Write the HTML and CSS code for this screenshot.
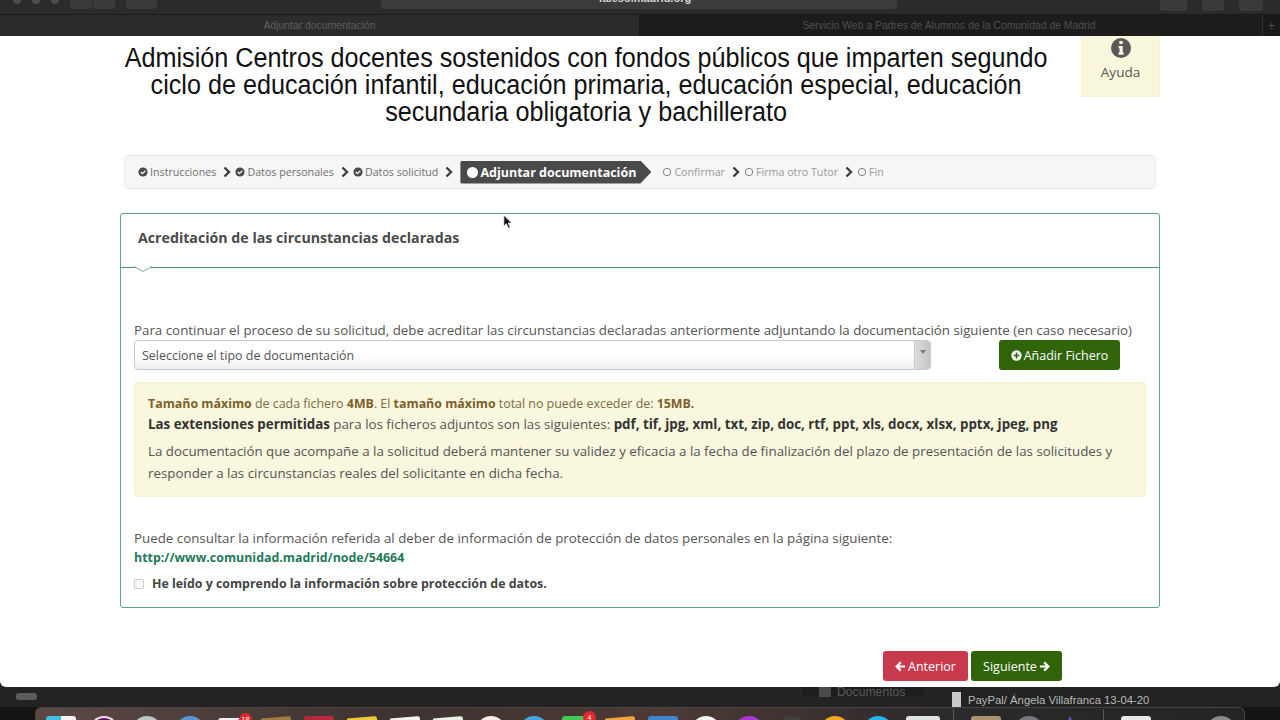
FILE: index.html
```html
<!DOCTYPE html>
<html lang="es">
<head>
<meta charset="utf-8">
<title>Adjuntar documentación</title>
<link rel="stylesheet" href="styles.css">
</head>
<body>
<svg class="defs" width="0" height="0" aria-hidden="true">
  <defs>
    <symbol id="i-check" viewBox="0 0 12 12"><circle cx="6" cy="6" r="5.5" fill="currentColor"/><path d="M3.3 6.1 5.2 8 8.8 4.4" fill="none" stroke="#f5f5f5" stroke-width="1.6"/></symbol>
    <symbol id="i-chev" viewBox="0 0 10 12"><path d="M2.5 1.5 7 6l-4.500 4.500" fill="none" stroke="currentColor" stroke-width="2.400"/></symbol>
    <symbol id="i-ring" viewBox="0 0 12 12"><circle cx="6" cy="6" r="4.400" fill="none" stroke="currentColor" stroke-width="1.200"/></symbol>
    <symbol id="i-plus" viewBox="0 0 12 12"><circle cx="6" cy="6" r="5.600" fill="currentColor"/><path d="M6 2.800v6.400M2.800 6h6.400" stroke="#2f6409" stroke-width="1.800"/></symbol>
    <symbol id="i-left" viewBox="0 0 12 12"><path d="M6.300 1.500 1.800 6l4.500 4.500M2.200 6H11" fill="none" stroke="currentColor" stroke-width="2.400"/></symbol>
    <symbol id="i-right" viewBox="0 0 12 12"><path d="M5.700 1.500 10.200 6l-4.500 4.500M9.800 6H1" fill="none" stroke="currentColor" stroke-width="2.400"/></symbol>
  </defs>
</svg>

<header class="chrome">
  <div class="toolbar">
    <div class="lights"><span class="light"></span><span class="light"></span><span class="light"></span></div>
    <div class="navs"><span class="nav"></span><span class="nav"></span></div>
    <span class="nav side"></span>
    <div class="address"><span class="url">faleso.madrid.org</span></div>
    <div class="tools"><span class="tool t1"></span><span class="tool t2"></span><span class="tool t3"></span></div>
  </div>
  <div class="tabs">
    <div class="tab current">Adjuntar documentación</div>
    <div class="tab">Servicio Web a Padres de Alumnos de la Comunidad de Madrid</div>
    <div class="tab-add">+</div>
  </div>
</header>

<main class="page">
  <div class="top">
    <h1 class="title">Admisión Centros docentes sostenidos con fondos públicos que imparten segundo ciclo de educación infantil, educación primaria, educación especial, educación secundaria obligatoria y bachillerato</h1>
    <aside class="help">
      <svg class="help-icon" viewBox="0 0 20 20"><circle cx="10" cy="10" r="10" fill="#595959"/><path d="M8.300 2.900h3.400v3H8.300zM7.500 8h4.200v6.400h1v2.300H7.500v-2.300h1v-4.100h-1z" fill="#f8f7dc"/></svg>
      <span>Ayuda</span>
    </aside>
  </div>

  <nav class="steps">
    <span class="step"><svg class="ico"><use href="#i-check"/></svg>Instrucciones</span>
    <svg class="chev"><use href="#i-chev"/></svg>
    <span class="step"><svg class="ico"><use href="#i-check"/></svg>Datos personales</span>
    <svg class="chev"><use href="#i-chev"/></svg>
    <span class="step"><svg class="ico"><use href="#i-check"/></svg>Datos solicitud</span>
    <svg class="chev"><use href="#i-chev"/></svg>
    <span class="step-active"><span class="dot"></span>Adjuntar documentación</span>
    <span class="step off first-off"><svg class="ico"><use href="#i-ring"/></svg>Confirmar</span>
    <svg class="chev"><use href="#i-chev"/></svg>
    <span class="step off"><svg class="ico"><use href="#i-ring"/></svg>Firma otro Tutor</span>
    <svg class="chev"><use href="#i-chev"/></svg>
    <span class="step off"><svg class="ico"><use href="#i-ring"/></svg>Fin</span>
  </nav>

  <section class="card">
    <div class="card-head">
      <h2>Acreditación de las circunstancias declaradas</h2>
      <svg class="notch" viewBox="0 0 18 7"><path d="M0 .5 9 5.500 18 .5" fill="#fff" stroke="#7fae9c"/></svg>
    </div>
    <div class="card-body">
      <p class="lead">Para continuar el proceso de su solicitud, debe acreditar las circunstancias declaradas anteriormente adjuntando la documentación siguiente (en caso necesario)</p>
      <div class="picker">
        <div class="select"><span class="select-text">Seleccione el tipo de documentación</span><span class="select-arrow"></span></div>
        <button class="btn add"><svg class="btn-ico"><use href="#i-plus"/></svg>Añadir Fichero</button>
      </div>
      <div class="alert">
        <p class="alert-line"><b class="warm">Tamaño máximo</b> de cada fichero <b class="warm">4MB</b>. El <b class="warm">tamaño máximo</b> total no puede exceder de: <b class="warm">15MB.</b></p>
        <p class="alert-line dark"><b>Las extensiones permitidas</b> para los ficheros adjuntos son las siguientes: <b>pdf, tif, jpg, xml, txt, zip, doc, rtf, ppt, xls, docx, xlsx, pptx, jpeg, png</b></p>
        <p class="alert-note">La documentación que acompañe a la solicitud deberá mantener su validez y eficacia a la fecha de finalización del plazo de presentación de las solicitudes y responder a las circunstancias reales del solicitante en dicha fecha.</p>
      </div>
      <p class="privacy">Puede consultar la información referida al deber de información de protección de datos personales en la página siguiente:</p>
      <a class="link" href="#">http://www.comunidad.madrid/node/54664</a>
      <label class="agree"><input class="check" type="checkbox"><span>He leído y comprendo la información sobre protección de datos.</span></label>
    </div>
  </section>

  <div class="actions">
    <button class="btn prev"><svg class="btn-ico"><use href="#i-left"/></svg>Anterior</button>
    <button class="btn next">Siguiente<svg class="btn-ico after"><use href="#i-right"/></svg></button>
  </div>

  <svg class="cursor" viewBox="0 0 12 18"><path d="M1 1v13l3.200-3 2.300 5.500 2.200-1-2.300-5.200H10.500z" fill="#111" stroke="#fff" stroke-width=".8"/></svg>
</main>

<footer class="desktop">
  <div class="strip">
    <span class="pill"></span>
    <div class="docs"><span class="doc-ico"></span>Documentos</div>
    <div class="paypal"><span class="file-ico"></span>PayPal/ Ángela Villafranca 13-04-20</div>
  </div>
  <div class="dock-row">
    <div class="dock">
      <span class="app finder"></span>
      <span class="app circle itunes"></span>
      <span class="app circle grey"></span>
      <span class="app circle blue"></span>
      <span class="app mail"><span class="tilt"></span><span class="badge">18</span></span>
      <span class="app brown tilted"></span>
      <span class="app red"></span>
      <span class="app yellow tilted"></span>
      <span class="app white tilted"></span>
      <span class="app maps tilted"></span>
      <span class="app circle photos"></span>
      <span class="app circle sky"></span>
      <span class="app green"><span class="badge">4</span></span>
      <span class="app orange tilted"></span>
      <span class="app window"></span>
      <span class="app circle white"></span>
      <span class="app circle purple"></span>
      <span class="app circle dim"></span>
      <span class="app circle amber"></span>
      <span class="app circle cyan"></span>
      <span class="app shot"></span>
      <span class="sep"></span>
      <span class="app pic"></span>
      <span class="app circle slate"></span>
      <span class="app tri"></span>
      <span class="sep second"></span>
      <span class="app paper"></span>
      <span class="app circle trash"></span>
    </div>
  </div>
</footer>
</body>
</html>
```
FILE: styles.css
```css
* { box-sizing: border-box; }
html, body { margin: 0; height: 100%; }
body {
  width: 1280px; height: 720px; overflow: hidden;
  display: flex; flex-direction: column;
  background: #202020;
  font-family: "Open Sans", "Liberation Sans", sans-serif;
  color: #555;
}
.defs { position: absolute; }
p, h1, h2 { margin: 0; }

/* browser chrome */
.chrome { flex: 0 0 36px; display: flex; flex-direction: column; background: #2b2b2b; }
.toolbar { height: 14px; display: flex; align-items: flex-start; overflow: hidden; }
.lights { display: flex; gap: 11px; padding-left: 13px; margin-top: -4px; }
.light { width: 8px; height: 8px; border-radius: 50%; background: #4d4d4d; }
.navs { display: flex; gap: 1px; margin-left: 11px; }
.nav { width: 22px; height: 9px; background: #3a3a3a; border-radius: 0 0 3px 3px; }
.nav.side { width: 31px; margin-left: 11px; }
.address { width: 516px; height: 9px; margin-left: 224px; padding-left: 12px; background: #3b3b3b; border-radius: 0 0 3px 3px; text-align: center; }
.url { display: block; margin-top: -9px; font: 700 11px/14px "Liberation Sans", sans-serif; color: #d8d8d8; }
.tools { display: flex; gap: 15px; margin-left: 263px; }
.tool { height: 11px; background: #3a3a3a; border-radius: 0 0 3px 3px; }
.t1 { width: 27px; }
.t2 { width: 22px; }
.t3 { width: 24px; }
.tabs { height: 22px; display: flex; background: #191919; border-top: 1px solid #1a1a1a; }
.tab { display: flex; align-items: center; justify-content: center; width: 622px; padding-right: 4px; font: 10.400px "Liberation Sans", sans-serif; color: #4f4f4f; background: #1c1c1c; }
.tab.current { width: 639px; padding-right: 0; color: #5e5e5e; background: #2c2c2c; margin-right: 1px; }
.tab-add { width: 18px; display: flex; align-items: center; justify-content: center; color: #4a4a4a; font: 13px "Liberation Sans", sans-serif; border-left: 1px solid #333; }

/* page */
.page {
  flex: 0 0 651px; position: relative;
  background: #fff; border-radius: 0 0 6px 6px;
  padding: 0 120px; overflow: hidden;
}
.top { display: flex; align-items: flex-start; height: 119px; }
.title {
  flex: 0 0 997px; margin-right: -65px; padding-top: 9px;
  font: 400 27px/27px "Liberation Sans", sans-serif;
  color: #111; text-align: center;
  transform: translateX(1px) scaleX(.933); transform-origin: 0 0;
}
.help {
  width: 79px; height: 61px; margin-left: 29px;
  background: #f8f7dc; border: 1px solid #f3f2d8; border-top: 0;
  display: flex; flex-direction: column; align-items: center;
  font-size: 13.500px; line-height: 18px; color: #555;
}
.help-icon { width: 20px; height: 20px; margin: 2px 0 5px; }

.steps {
  margin: 0 4px; height: 34px;
  display: flex; align-items: center;
  padding-left: 13px;
  background: #f6f6f6; border: 1px solid #e9e9e9; border-radius: 4px;
  font-size: 10.700px; color: #707070;
}
.step { display: flex; align-items: center; white-space: nowrap; }
.ico { width: 10px; height: 10px; margin-right: 2px; color: #4a4a4a; }
.chev { width: 10px; height: 12px; margin: 0 3px 0 6px; color: #3f3f3f; }
.step.off { color: #9a9a9a; }
.step.off .ico { color: #808080; }
.first-off { margin-left: 11px; }
.step-active {
  display: flex; align-items: center; height: 23px; width: 191px;
  margin-left: 3px; padding-left: 7px;
  background: #4a4a4a; color: #fff;
  font-size: 12.500px; font-weight: 700; white-space: nowrap;
  border-radius: 2px 0 0 2px;
  clip-path: polygon(0 0, 180px 0, 100% 50%, 180px 100%, 0 100%);
}
.dot { width: 11px; height: 11px; border-radius: 50%; background: #fff; margin-right: 2px; }

.card {
  margin-top: 24px; height: 395px;
  border: 1px solid #5aa58c; border-radius: 3px;
  display: flex; flex-direction: column;
}
.card-head {
  flex: 0 0 54px; position: relative;
  padding: 14px 17px 0;
  border-bottom: 1px solid #4f8f74;
}
.card-head h2 { font-size: 14.200px; line-height: 20px; font-weight: 700; color: #4a4a4a; }
.notch { position: absolute; left: 13px; bottom: -6px; width: 18px; height: 7px; }
.card-body { padding: 53px 13px 0; }
.lead { font-size: 13.330px; line-height: 18px; color: #555; white-space: nowrap; }
.picker { display: flex; align-items: center; margin-top: 1px; }
.select {
  width: 797px; height: 30px;
  display: flex; align-items: center; justify-content: space-between;
  padding-left: 7px;
  background: linear-gradient(#fff 50%, #eee);
  border: 1px solid #c9c9c9; border-radius: 4px;
  font-size: 12.470px; color: #555;
}
.select-arrow {
  width: 16px; height: 28px; position: relative;
  background: linear-gradient(90deg, #ddd, #c4c4c4);
  border-left: 1px solid #c9c9c9; border-radius: 0 3px 3px 0;
}
.select-arrow::after {
  content: ""; position: absolute; left: 5px; top: 9px;
  border: 3px solid transparent; border-top: 4px solid #777;
}
.btn {
  height: 30px; display: inline-flex; align-items: center; justify-content: center;
  border: 0; border-radius: 3px; color: #fff;
  font: 500 12.500px "Open Sans", sans-serif; padding: 0;
}
.btn-ico { width: 11px; height: 11px; margin-right: 2px; }
.btn-ico.after { margin: 0 0 0 2px; }
.add { width: 121px; margin-left: 68px; background: #2f6409; }
.alert {
  margin-top: 12px; width: 1012px; height: 115px;
  padding: 11px 13px 0;
  background: #f9f7dd; border: 1px solid #f3f1d6; border-radius: 3px;
  font-size: 12.400px; line-height: 20px;
}
.alert-line { color: #7a6a48; white-space: nowrap; }
.warm { color: #7d5f2c; }
.alert-line.dark { color: #555; font-size: 13.330px; }
.alert-line.dark b { color: #333; }
.alert-note { margin-top: 6px; font-size: 13.330px; line-height: 22px; color: #555; }
.privacy { margin-top: 32px; font-size: 13.330px; line-height: 18px; color: #555; }
.link { display: block; margin-top: 2px; font-size: 12.400px; line-height: 18px; font-weight: 700; color: #1f7a5a; text-decoration: none; }
.agree { display: flex; align-items: center; margin-top: 8px; font-size: 12.400px; line-height: 18px; font-weight: 700; color: #444; }
.check {
  appearance: none; width: 10px; height: 10px; margin: 0 8px 0 0;
  border: 1px solid #ccc; border-radius: 2px; background: #fafafa;
}

.actions { display: flex; justify-content: flex-end; gap: 3px; margin: 43px 98px 0 0; }
.prev { width: 85px; background: #c9394c; }
.next { width: 91px; background: #2f6409; }

.cursor { position: absolute; left: 503px; top: 178px; width: 10px; height: 16px; }

/* desktop */
.desktop { flex: 1; display: flex; flex-direction: column; background: #1d1d1d; overflow: hidden; }
.strip { flex: 0 0 18px; display: flex; align-items: flex-start; background: #232323; }
.pill { width: 21px; height: 7px; margin: 6px 0 0 16px; background: #5c5c5c; border-radius: 3px; }
.docs {
  display: flex; align-items: center; gap: 6px;
  width: 123px; height: 10px; margin-left: 764px; padding-left: 17px;
  background: #1e1e1e; border-left: 1px solid #2e2e2e;
  font: 12.200px/10px "Liberation Sans", sans-serif; color: #5a5a5a;
}
.doc-ico { width: 12px; height: 10px; background: #4a4a4a; flex: none; }
.paypal {
  display: flex; align-items: center; gap: 7px; white-space: nowrap;
  margin: 5px 0 0 28px;
  font: 11.300px/14px "Liberation Sans", sans-serif; color: #b9b9b9;
}
.file-ico { width: 9px; height: 15px; background: #c9c9c9; }
.dock-row { flex: 1; padding-left: 35px; background: #141414; }
.dock {
  width: 1210px; height: 15px; display: flex; align-items: flex-start;
  padding: 8px 0 0 10px; gap: 13px;
  border: 1px solid #4a4342; border-bottom: 0;
  border-radius: 6px 6px 0 0;
  background: linear-gradient(90deg, #5a4844, #3d3331 30%, #4c3a35 52%, #2c2a2a 75%, #242424);
}
.app { flex: 0 0 30px; height: 20px; position: relative; background: #888; border-radius: 3px; }
.circle { border-radius: 50%; height: 30px; }
.tilted { clip-path: polygon(0 12%, 100% 0, 100% 100%, 0 100%); }
.finder { background: linear-gradient(90deg, #3ec2e4 50%, #f4f4f4 50%); }
.itunes { background: #62145a; border: 2px solid #e7e2e6; }
.grey { background: #b9c8c6; }
.blue { background: #5f93d6; }
.mail { background: #f0f2f5; margin-top: 2px; }
.tilt { position: absolute; inset: 0; background: #3d74c6; clip-path: polygon(0 25%, 100% 0, 100% 15%, 0 40%); }
.brown { background: #a07c45; }
.red { background: #b8283c; }
.yellow { background: #eecb3a; }
.white { background: #f2f2f2; }
.maps { background: #e9f0e4; }
.photos { background: #f5ede2; }
.sky { background: #46a4e0; }
.green { background: #3ecb58; }
.orange { background: #eea53d; }
.window { background: #3f86cc; }
.purple { background: #a63ad0; }
.dim { background: #404040; }
.amber { background: #f0a821; }
.cyan { background: #25b4ea; }
.shot { background: #dfe3e4; flex-basis: 34px; }
.sep { flex: 0 0 1px; height: 15px; margin-top: -7px; background: #5a5a5a; }
.sep.second { margin-left: 11px; }
.pic { background: #a8946e; margin-left: 4px; }
.slate { background: #75787c; }
.tri { background: #6a55c8; flex-basis: 18px; margin-left: 4px; clip-path: polygon(50% 0, 100% 100%, 0 100%); }
.paper { background: #e8e8e8; margin: 0 42px 0 4px; }
.trash { background: #8a8a8a; }
.badge {
  position: absolute; right: -4px; top: -5px;
  width: 13px; height: 13px; border-radius: 50%;
  background: #e0282e; color: #fff; text-align: center;
  font: 7px/13px "Liberation Sans", sans-serif;
}
```
